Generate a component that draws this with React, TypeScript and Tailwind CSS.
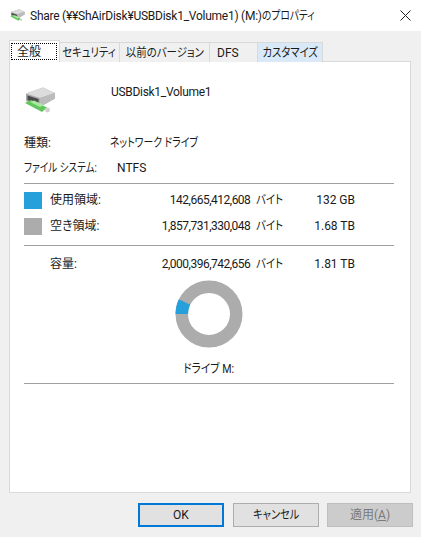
const tabs = [
  { label: "セキュリティ", w: "w-[60px]", bg: "bg-[#f0f0f0]", ratio: "scale-x-[0.86]", cls: "justify-center" },
  { label: "以前のバージョン", w: "w-[90px]", bg: "bg-[#f0f0f0]", ratio: "scale-x-[0.87]", cls: "justify-center" },
  { label: "DFS", w: "w-[48px]", bg: "bg-[#f0f0f0]", ratio: "", cls: "pl-[7px]" },
  { label: "カスタマイズ", w: "w-[65px]", bg: "bg-[#d9e9f8]", ratio: "scale-x-[0.86]", cls: "justify-center" },
];

function DriveIcon({ width }: { width: number }) {
  return (
    <svg width={width} height={(width * 26) / 34} viewBox="0 0 34 26">
      <path d="M2 6.5 L19 0.5 L31 6 L31 11.5 L16 20 L2 14 Z" fill="#a9a9a9" />
      <path d="M2 6.5 L19 0.5 L31 6 L16 11 Z" fill="#dcdcdc" />
      <path d="M16 11 L31 6 L31 11.5 L16 20 Z" fill="#bcbcbc" />
      <path d="M3.5 8.5 L14.5 12 L14.5 17 L3.5 13 Z" fill="#4a4a4a" />
      <path d="M1 16 L7 13 L23 20.5 L18 25 Z" fill="#62c65c" />
      <path d="M6 15 L10 13.5 L20 18 L16 20 Z" fill="#a8e8a2" />
      <circle cx="23.5" cy="23" r="2.4" fill="#cfcfcf" />
    </svg>
  );
}

function Donut() {
  return (
    <svg width="68" height="68" viewBox="0 0 68 68">
      <circle cx="34" cy="34" r="27.25" fill="none" stroke="#acacac" strokeWidth="12.5" />
      <path d="M0.5 34 A33.5 33.5 0 0 1 3.9 19.3 L15.1 24.8 A21 21 0 0 0 13 34 Z" fill="#26a0da" />
    </svg>
  );
}

function Row({ swatch, label, bytes, size }: { swatch?: string; label: string; bytes: string; size: string }) {
  return (
    <div className="flex items-center h-[26px]">
      <div className={`w-[18px] h-[17px] ${swatch ?? ""}`} />
      <div className="ml-[8px] w-[70px]">{label}</div>
      <div className="w-[163px] text-right whitespace-nowrap">
        <span className="tracking-[-0.5px]">{bytes}</span>
        <span className="inline-block origin-right scale-x-[0.87] -ml-[1px]">バイト</span>
      </div>
      <div className="w-[72px] text-right">{size}</div>
    </div>
  );
}

export default function App() {
  return (
    <div className="w-[421px] h-[537px] overflow-hidden flex flex-col bg-[#f0f0f0] text-[12px] leading-[16px] text-[#1a1a1a] font-['Roboto','Noto_Sans_CJK_JP',sans-serif] [font-feature-settings:'palt']">
      {/* title bar */}
      <div className="h-[31px] shrink-0 bg-white flex items-center pl-[10px]">
        <DriveIcon width={16} />
        <span className="ml-[4px] whitespace-nowrap tracking-[-0.25px]">
          Share (¥¥ShAirDisk¥USBDisk1_Volume1) (M:)
          <span className="inline-block origin-left scale-x-[0.81] tracking-normal">のプロパティ</span>
        </span>
        <svg className="ml-auto mr-[10px]" width="11" height="11" viewBox="0 0 11 11">
          <path d="M0.5 0.5 L10.5 10.5 M10.5 0.5 L0.5 10.5" stroke="#222" strokeWidth="1" />
        </svg>
      </div>

      {/* tabs */}
      <div className="mt-[9px] ml-[9px] flex items-end h-[22px] relative z-10 whitespace-nowrap">
        <div className="w-[51px] h-[22px] bg-white border border-[#d9d9d9] border-b-0 pt-[2px] pl-[1px]">
          <div className="w-[46px] h-[17px] flex items-center pl-[5px] border border-dotted border-black">全般</div>
        </div>
        {tabs.map((t) => (
          <div
            key={t.label}
            className={`${t.w} ${t.bg} ${t.cls} h-[20px] border-t border-r border-[#d9d9d9] flex items-center`}
          >
            <span className={`inline-block ${t.ratio}`}>{t.label}</span>
          </div>
        ))}
      </div>

      {/* panel */}
      <div className="ml-[9px] w-[402px] h-[432px] -mt-px bg-white border border-[#d9d9d9] px-[14px] shrink-0">
        <div className="flex h-[64px] pt-[19px]">
          <div className="mt-[6px] shrink-0"><DriveIcon width={34} /></div>
          <div className="ml-[53px] mt-[3px] tracking-[-0.3px]">USBDisk1_Volume1</div>
        </div>
        <div className="flex items-center h-[25px] mt-[4px]">
          <div className="w-[86px]">種類:</div>
          <div className="origin-left scale-x-[0.82] whitespace-nowrap">ネットワーク ドライブ</div>
        </div>
        <div className="flex items-center h-[25px]">
          <div className="w-[93px] shrink-0 origin-left scale-x-[0.8] whitespace-nowrap">ファイル システム:</div>
          <div>NTFS</div>
        </div>
        <div className="h-px bg-[#a0a0a0] w-[370px] mt-[3px] mb-[3px]" />
        <Row swatch="bg-[#26a0da]" label="使用領域:" bytes="142,665,412,608 " size="132 GB" />
        <Row swatch="bg-[#acacac]" label="空き領域:" bytes="1,857,731,330,048 " size="1.68 TB" />
        <div className="h-px bg-[#a0a0a0] w-[370px] mt-[6px] mb-[5px]" />
        <Row label="容量:" bytes="2,000,396,742,656 " size="1.81 TB" />
        <div className="w-[370px] flex flex-col items-center">
          <div className="mt-[3px]"><Donut /></div>
          <div className="mt-[13px] scale-x-[0.89] whitespace-nowrap">ドライブ M:</div>
        </div>
        <div className="h-px bg-[#a0a0a0] w-[370px] mt-[6px]" />
      </div>

      {/* buttons */}
      <div className="flex mt-[10px] ml-[138px] gap-[9px]">
        <button className="w-[86px] h-[24px] bg-[#e1e1e1] border-2 border-[#0078d7]">OK</button>
        <button className="w-[86px] h-[24px] bg-[#e1e1e1] border border-[#adadad]">
          <span className="inline-block scale-x-[0.85]">キャンセル</span>
        </button>
        <button className="w-[86px] h-[24px] -ml-[1px] bg-[#cccccc] border border-[#bfbfbf] text-[#7a7a7a]">
          適用(<span className="underline">A</span>)
        </button>
      </div>
    </div>
  );
}
